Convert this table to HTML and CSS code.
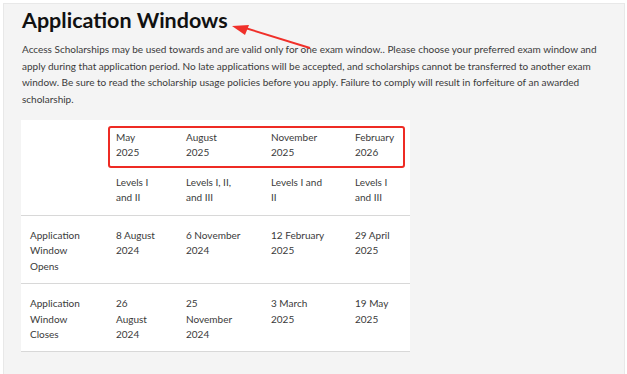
FILE: index.html
```html
<!DOCTYPE html>
<html lang="en">
<head>
    <meta charset="UTF-8">
    <meta name="viewport" content="width=device-width, initial-scale=1.0">
    <title>Application Windows</title>
    <link rel="stylesheet" href="styles.css">
</head>
<body>
    <div class="panel">
        <h1 class="title">Application Windows</h1>
        <p class="intro">Access Scholarships may be used towards and are valid only for one exam window.. Please choose your preferred exam window and apply during that application period. No late applications will be accepted, and scholarships cannot be transferred to another exam window. Be sure to read the scholarship usage policies before you apply. Failure to comply will result in forfeiture of an awarded scholarship.</p>

        <div class="table-wrap">
            <table class="windows">
                <colgroup>
                    <col class="c1"><col class="c2"><col class="c3"><col class="c4"><col class="c5">
                </colgroup>
                <tr class="head-row">
                    <td></td>
                    <td>May<br>2025</td>
                    <td>August<br>2025</td>
                    <td>November<br>2025</td>
                    <td>February<br>2026</td>
                </tr>
                <tr class="levels-row">
                    <td></td>
                    <td>Levels I and II</td>
                    <td>Levels I, II, and III</td>
                    <td>Levels I and II</td>
                    <td>Levels I and III</td>
                </tr>
                <tr class="date-row">
                    <td>Application Window Opens</td>
                    <td>8 August 2024</td>
                    <td>6 November 2024</td>
                    <td>12 February 2025</td>
                    <td>29 April 2025</td>
                </tr>
                <tr class="date-row">
                    <td>Application Window Closes</td>
                    <td>26 August 2024</td>
                    <td>25 November 2024</td>
                    <td>3 March 2025</td>
                    <td>19 May 2025</td>
                </tr>
            </table>
            <div class="highlight"></div>
        </div>

        <!-- annotation arrow pointing at the heading -->
        <svg class="arrow" width="90" height="40" viewBox="0 0 90 40">
            <line x1="80" y1="30" x2="12" y2="9" stroke="#f0302a" stroke-width="2"/>
            <polygon points="2,8 19,7 15,17" fill="#f0302a"/>
        </svg>
    </div>
</body>
</html>
```

FILE: styles.css
```css
body {
    margin: 0;
    background-color: #ffffff;
    font-family: Lato, 'Open Sans', sans-serif;
    color: #3a3a3a;
}
.panel {
    position: relative;
    margin: 3px 2px 0 3px;
    height: 371px;
    box-sizing: border-box;
    background-color: #f4f4f4;
    border: 1px solid #e8e8e8;
    border-bottom: none;
    padding: 0 18px;
}
.title {
    margin: 0;
    padding-top: 2px;
    font-size: 21.5px;
    font-weight: 700;
    color: #111111;
    line-height: 28px;
}
.intro {
    margin: 7px 0 0 0;
    font-size: 10px;
    line-height: 16.7px;
    color: #3a3a3a;
}
.table-wrap {
    position: relative;
    margin-top: 12px;
    width: 389px;
    margin-left: -1px;
}
.windows {
    width: 389px;
    table-layout: fixed;
    border-collapse: collapse;
    background-color: #ffffff;
    font-size: 10px;
    line-height: 15.5px;
    color: #3a3a3a;
}
.c1 { width: 86px; }
.c2 { width: 70px; }
.c3 { width: 85px; }
.c4 { width: 84px; }
.c5 { width: 64px; }
.windows td {
    vertical-align: top;
    padding: 10px 20px 9px 9px;
    border-bottom: 1px solid #d8d8d8;
}
.windows td:last-child {
    padding-right: 10px;
}
.windows .head-row td {
    padding-bottom: 4px;
    border-bottom: none;
}
.windows .levels-row td {
    padding-bottom: 9px;
}
.windows .date-row td {
    padding-top: 12px;
}
.windows tr:last-child td {
    padding-bottom: 8px;
}
.highlight {
    position: absolute;
    left: 87px;
    top: 6px;
    width: 293px;
    height: 38px;
    border: 2px solid #ee2b24;
    border-radius: 3px;
}
.arrow {
    position: absolute;
    left: 226px;
    top: 14px;
}
```
